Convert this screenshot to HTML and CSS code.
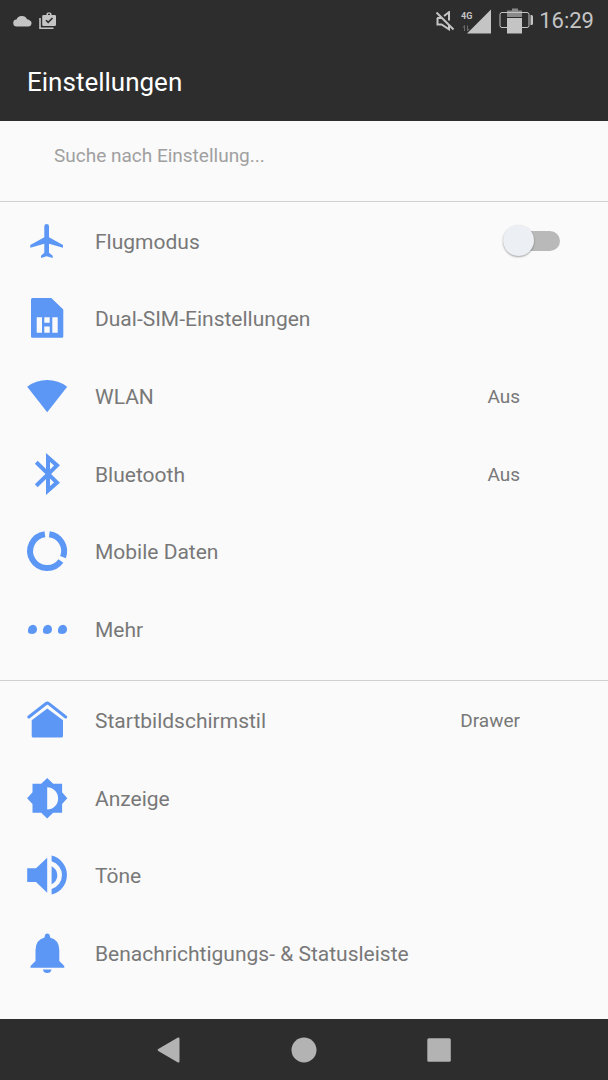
FILE: index.html
```html
<!DOCTYPE html>
<html lang="de">
<head>
<meta charset="utf-8">
<meta name="viewport" content="width=device-width, initial-scale=1">
<title>Einstellungen</title>
<link rel="stylesheet" href="styles.css">
</head>
<body>
<header class="top">
  <div class="status">
    <div class="status-left">
      <svg class="cloud" viewBox="0 0 20 12" width="20" height="12" aria-hidden="true"><path d="M4 11.500a3.500 3.500 0 0 1-.5-7A5.500 5.500 0 0 1 9 1a5.500 5.500 0 0 1 5 3.200 4 4 0 0 1 2.500 1A3.300 3.300 0 0 1 16 11.500z"/></svg>
      <svg viewBox="0 0 18 18" width="18" height="18" aria-hidden="true"><path d="M1 6v10.200h13.500" fill="none" stroke="#c4c4c4" stroke-width="1.600"/><path fill-rule="evenodd" d="M4.500 3H7.500V2Q7.500.5 9 .5h2q1.500 0 1.500 1.500V3h3.200q1.300 0 1.300 1.300v8.400q0 1.300-1.300 1.300H4.500q-1.300 0-1.300-1.300V4.300Q3.200 3 4.500 3zM9 1.800V3h2V1.800z"/><path d="M7 8.200l2.200 2.200L13.500 6" fill="none" stroke="#2d2d2d" stroke-width="1.600"/></svg>
    </div>
    <div class="status-right">
      <svg viewBox="0 0 20 20" width="20" height="20" aria-label="Stumm"><path d="M1.500 1.500l17 17M2.500 7v6.500h4l7.500 4.800V14M2 7h4.500M9 5l5-3.800v8.300" fill="none" stroke="#c4c4c4" stroke-width="2"/></svg>
      <svg viewBox="0 0 32 26" width="32" height="26" aria-label="4G"><path d="M6 25.500L30 1.500v24z"/><text class="network" x="0" y="11">4G</text><path d="M3.500 23v-5.500l-1.500 2M6.500 17.500V23l1.500-2" fill="none" stroke="#6c6c6c" stroke-width="1"/></svg>
      <svg viewBox="0 0 34 26" width="34" height="26" aria-label="Akku"><path d="M13 .5h6v2h4V9H8V2.500h5z" fill="#8a8a8a"/><path d="M8 10h15v15.500H8z"/><rect x="1" y="4.500" width="29" height="15" rx="2" fill="none" stroke="#c4c4c4" stroke-width="1"/><path d="M31.500 7h1q1.500 0 1.500 1.500v7q0 1.500-1.500 1.500h-1z"/></svg>
      <time>16:29</time>
    </div>
  </div>
  <h1 class="title">Einstellungen</h1>
</header>
<main class="content">
  <form class="search" role="search"><input class="search-input" type="text" placeholder="Suche nach Einstellung..." aria-label="Suche nach Einstellung"></form>
  <ul class="group group-network">
    <li class="row"><svg class="icon" viewBox="0 0 40 40" aria-hidden="true"><path d="M17.300 5.300a2.300 2.300 0 0 1 4.700 0v11L36 24v2.700L22 22.700v9l3.700 3V37l-6-1.700L14 37v-2.300l3.300-3v-9L3.300 26.700V24l14-7.700z"/></svg><label class="name" for="flight">Flugmodus</label><input class="switch" id="flight" type="checkbox" role="switch"></li>
    <li class="row"><svg class="icon" viewBox="0 0 40 40" aria-hidden="true"><path fill-rule="evenodd" d="M5.500 0H24.300l12 11.500V38.500q0 1.300-1.300 1.300H5.500Q4 39.800 4 38.500V1.500Q4 0 5.500 0zM9.700 19.200v15.500H15V19.200zm7.600 0v5.500h5.400v-5.500zm0 9.200v6.300h5.400v-6.300zm8-9.200v15.500h5.400V19.200z"/></svg><a class="name" href="#sim">Dual-SIM-Einstellungen</a></li>
    <li class="row"><svg class="icon" viewBox="0 0 40 40" aria-hidden="true"><path d="M.2 10.700Q9 4 20.200 4T40.200 10.700L20.200 36.200z"/></svg><a class="name" href="#wlan">WLAN</a><span class="value">Aus</span></li>
    <li class="row"><svg class="icon" viewBox="0 0 40 40" aria-hidden="true"><path d="M9.300 8.300L30 28.600 21 36.500V3.500l9 7.900L9.300 31.700" fill="none" stroke="#5c97f6" stroke-width="4"/></svg><a class="name" href="#bluetooth">Bluetooth</a><span class="value">Aus</span></li>
    <li class="row"><svg class="icon" viewBox="0 0 40 40" aria-hidden="true"><path d="M22.300 3.200A17 17 0 0 1 36 26.100M33.900 30A17 17 0 1 1 17.900 3.200" fill="none" stroke="#5c97f6" stroke-width="6"/></svg><a class="name" href="#daten">Mobile Daten</a></li>
    <li class="row"><svg class="icon" viewBox="0 0 40 40" aria-hidden="true"><g id="dot"><path d="M1 20.500Q2 16 6 15.700q4 .3 4 5-.5 3.800-4.500 4.200l-3.500-.4Q.5 23.500 1 20.500z"/></g><use href="#dot" x="15"/><use href="#dot" x="30"/></svg><a class="name" href="#mehr">Mehr</a></li>
  </ul>
  <ul class="group group-device">
    <li class="row"><svg class="icon" viewBox="0 0 40 40" aria-hidden="true"><path d="M1.800 17L18.800 3.700q1.500-1.200 3 0L38.700 17" fill="none" stroke="#5c97f6" stroke-width="3" stroke-linecap="round"/><path d="M4.700 20.300L20.300 8.600 36 20.300V36q0 1.500-1.500 1.500H6.200Q4.700 37.500 4.700 36z"/></svg><a class="name" href="#start">Startbildschirmstil</a><span class="value">Drawer</span></li>
    <li class="row"><svg class="icon" viewBox="0 0 40 40" aria-hidden="true"><path fill-rule="evenodd" d="M20.200 0l6 5.700h8.900v8.600l5.200 5.900-5.200 5.900v8.600h-8.900l-6 5.700-6-5.700H5.500v-8.600L.1 20.200l5.400-5.900V5.700h8.700zM20.200 9.200v22.300q4.500 0 7.700-3.200t3.200-7.900-3.200-7.900-7.700-3.300z"/></svg><a class="name" href="#anzeige">Anzeige</a></li>
    <li class="row"><svg class="icon" viewBox="0 0 40 40" aria-hidden="true"><path d="M.2 13.200H9L20.200 2.700v35L9 27H.2zM24.600 11.200q5.700 3 5.700 9t-5.700 9zM24.600.6A20 20 0 0 1 24.600 39.500V34a14.500 14.500 0 0 0 0-27.800z"/></svg><a class="name" href="#toene">Töne</a></li>
    <li class="row"><svg class="icon" viewBox="0 0 40 40" aria-hidden="true"><path d="M17.500 4.500Q17.700.5 20.300.4T23.100 4.500Q32.300 7 32.300 17v11l5 5v1.700H3.500V33l5-5V17q0-10 9-12.500zM15.900 36.500h8.600q-.6 3.500-4.300 3.500t-4.300-3.500z"/></svg><a class="name" href="#status">Benachrichtigungs- &amp; Statusleiste</a></li>
  </ul>
</main>
<nav class="nav" aria-label="Systemnavigation">
  <button class="nav-button" type="button" aria-label="Zurück"><svg viewBox="0 0 26 26" width="26" height="26"><path d="M2.700 11.800L21.500.8q2-1 2 1v22.400q0 2-2 1L2.700 14.200q-2.200-1.200 0-2.400z"/></svg></button>
  <button class="nav-button" type="button" aria-label="Startseite"><svg viewBox="0 0 26 26" width="26" height="26"><circle cx="13" cy="13" r="12.500"/></svg></button>
  <button class="nav-button" type="button" aria-label="Übersicht"><svg viewBox="0 0 26 26" width="26" height="26"><rect x="1.300" y="1.300" width="23.500" height="23.500" rx="1.500"/></svg></button>
</nav>
</body>
</html>
```
FILE: styles.css
```css
* {
  box-sizing: border-box;
}

body {
  margin: 0;
  min-height: 100vh;
  display: flex;
  flex-direction: column;
  background: #fafafa;
  color: #787878;
  font-family: Roboto, "Noto Sans", sans-serif;
}

.top {
  background: #2d2d2d;
  color: #fff;
  padding-bottom: 21px;
}

.status {
  display: flex;
  justify-content: space-between;
  align-items: center;
  height: 41px;
  padding: 0 14px 0 13px;
  color: #c4c4c4;
  fill: #c4c4c4;
}

.status-left,
.status-right {
  display: flex;
  align-items: center;
  gap: 6px;
}

.status-right time {
  font-size: 22px;
  line-height: 26px;
}

.network {
  font-size: 9px;
  font-weight: 700;
}

.title {
  margin: 0;
  padding: 23px 27px 0;
  font-size: 26px;
  font-weight: 400;
  line-height: 36px;
}

.content {
  flex: 1;
}

.search {
  padding: 15px 54px 26px;
  border-bottom: 1px solid #d0d0d0;
}

.search-input {
  display: block;
  width: 100%;
  height: 39px;
  padding: 0;
  border: 0;
  background: none;
  color: #787878;
  font: 19px Roboto, "Noto Sans", sans-serif;
}

.search-input::placeholder {
  color: #a0a0a0;
  opacity: 1;
}

.group {
  display: grid;
  grid-auto-rows: 1fr;
  margin: 0;
  padding: 0;
  list-style: none;
}

.group-network {
  min-height: 479px;
  padding: 1px 0 11px;
  border-bottom: 1px solid #d0d0d0;
}

.group-device {
  min-height: 312px;
  padding-top: 1px;
}

.row {
  display: flex;
  align-items: center;
  padding: 0 48px 0 27px;
}

.icon {
  width: 40px;
  height: 40px;
  margin: 0 28px 2px 0;
  flex: none;
  overflow: visible;
  fill: #5c97f6;
}

.name {
  flex: 1;
  color: inherit;
  font-size: 21px;
  line-height: 28px;
  text-decoration: none;
}

.value {
  padding-right: 40px;
  font-size: 19px;
  line-height: 28px;
}

.switch {
  appearance: none;
  position: relative;
  display: flex;
  align-items: center;
  width: 57px;
  height: 32px;
  margin: 0 0 2px;
}

.switch::before {
  content: "";
  width: 100%;
  height: 20px;
  border-radius: 10px;
  background: #b9b9b9;
}

.switch::after {
  content: "";
  position: absolute;
  left: 0;
  width: 31px;
  height: 31px;
  border-radius: 50%;
  background: #eceff4;
  box-shadow: 0 1px 2px rgba(0, 0, 0, 0.35);
}

.switch:checked::after {
  left: 26px;
}

.nav {
  display: flex;
  justify-content: center;
  height: 61px;
  background: #2d2d2d;
}

.nav-button {
  display: flex;
  align-items: center;
  justify-content: center;
  width: 135px;
  padding: 0;
  border: 0;
  background: none;
  fill: #b3b3b3;
}
```
